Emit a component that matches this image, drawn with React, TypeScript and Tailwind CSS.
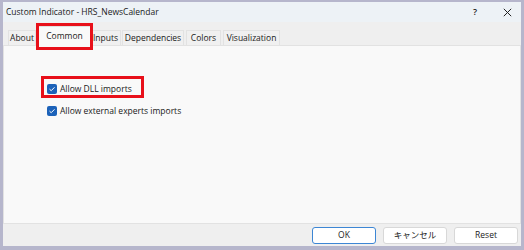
import React from 'react';

const font = { fontFamily: '"Open Sans", "Noto Sans CJK JP", sans-serif' };

const Check = () => (
  <span className="w-[10px] h-[10px] rounded-[2px] bg-[#1c62b9] flex items-center justify-center shrink-0">
    <svg width="8" height="8" viewBox="0 0 8 8">
      <path d="M1.5 4.1 L3.2 5.7 L6.5 2.3" stroke="#fff" strokeWidth="1" fill="none" />
    </svg>
  </span>
);

const Tab = ({ label, w, active }: { label: string; w: string; active?: boolean }) =>
  active ? (
    <div className={`${w} h-[20px] bg-[#f9f9f9] border border-[#e0e0e0] border-b-0 flex items-center justify-center text-[8.5px] text-[#1a1a1a] -mb-px relative z-10`}>
      {label}
    </div>
  ) : (
    <div className={`${w} h-[15px] bg-[#f0f0f0] border border-[#e2e2e2] border-b-0 flex items-center justify-center text-[8.5px] text-[#1a1a1a]`}>
      {label}
    </div>
  );

export default function App() {
  return (
    <div className="w-[524px] h-[250px] bg-[#b6b6cc] pl-[3px] pr-[3px] pt-[2px] pb-[4px]" style={font}>
      <div className="w-full h-full bg-[#efefef] flex flex-col">
        {/* title bar */}
        <div className="h-[20px] bg-[#edf2f6] flex items-center pl-[3px] pr-[9px] text-[8.5px] text-[#1a1a1a]">
          <span className="flex-1">Custom Indicator - HRS_NewsCalendar</span>
          <span className="w-[8px] text-center mr-[24px] text-[9px] font-semibold">?</span>
          <svg width="9" height="9" viewBox="0 0 9 9">
            <path d="M0.8 0.8 L8.2 8.2 M8.2 0.8 L0.8 8.2" stroke="#222" strokeWidth="1" />
          </svg>
        </div>

        {/* tabs */}
        <div className="h-[23px] flex items-end pl-[5px]">
          <Tab label="About" w="w-[28px]" />
          <div className="relative ml-px z-10">
            <Tab label="Common" w="w-[55px]" active />
            <div className="absolute -left-px -top-[3px] w-[57px] h-[27px] border-[3px] border-[#e8101a] z-20" />
          </div>
          <div className="-ml-[2px]" />
          <Tab label="Inputs" w="w-[31px]" />
          <div className="ml-px" />
          <Tab label="Dependencies" w="w-[62px]" />
          <div className="ml-[2px]" />
          <Tab label="Colors" w="w-[35px]" />
          <div className="ml-[2px]" />
          <Tab label="Visualization" w="w-[57px]" />
        </div>

        {/* content */}
        <div className="h-[179px] bg-[#f9f9f9] border border-[#e2e2e2] pt-[38px] pl-[43px] flex flex-col gap-[12px] text-[8.5px] text-[#1a1a1a]">
          <div className="relative h-[10px] flex items-center gap-[3px]">
            <Check />
            <span>Allow DLL imports</span>
            <div className="absolute -left-[6px] -top-[8px] w-[103px] h-[22px] border-[3px] border-[#e8101a]" />
          </div>
          <div className="h-[10px] flex items-center gap-[3px]">
            <Check />
            <span>Allow external experts imports</span>
          </div>
        </div>

        {/* footer */}
        <div className="flex-1 flex items-center justify-end gap-[7px] pr-[3px] pt-px">
          <button className="w-[64px] h-[17px] bg-white border border-[#3d86d4] rounded-[3px] text-[8.5px] text-[#1a1a1a] leading-none">
            OK
          </button>
          <button className="w-[64px] h-[17px] bg-white border border-[#d8d8d8] rounded-[3px] text-[8.5px] text-[#1a1a1a] leading-none">
            キャンセル
          </button>
          <button className="w-[64px] h-[17px] bg-white border border-[#d8d8d8] rounded-[3px] text-[8.5px] text-[#1a1a1a] leading-none">
            Reset
          </button>
        </div>
      </div>
    </div>
  );
}
